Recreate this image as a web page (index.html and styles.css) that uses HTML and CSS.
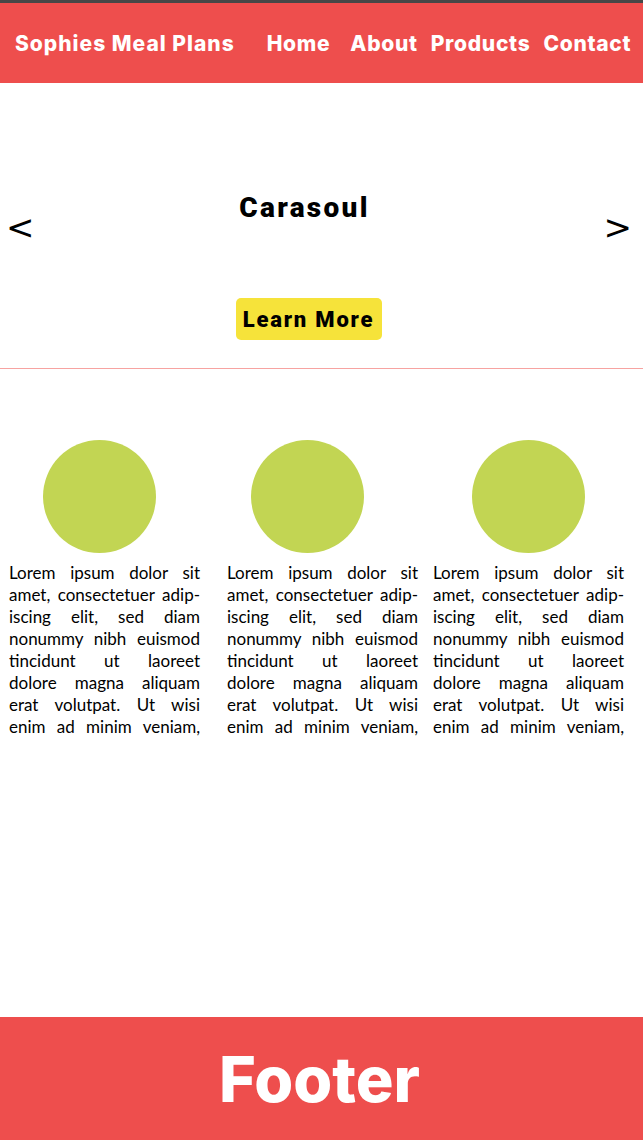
FILE: index.html
```html
<!DOCTYPE html>
<html lang="en">
<head>
<meta charset="utf-8">
<title>Sophies Meal Plans</title>
<link rel="stylesheet" href="styles.css">
</head>
<body>
<header class="site-header">
  <div class="brand">Sophies Meal Plans</div>
  <nav class="nav">
    <a class="nav-link home" href="#">Home</a>
    <a class="nav-link about" href="#">About</a>
    <a class="nav-link products" href="#">Products</a>
    <a class="nav-link contact" href="#">Contact</a>
  </nav>
</header>
<main class="main">
  <section class="carousel">
    <span class="arrow">&lt;</span>
    <div class="carousel-body">
      <h1 class="carousel-title">Carasoul</h1>
      <a class="btn" href="#">Learn More</a>
    </div>
    <span class="arrow arrow-right">&gt;</span>
  </section>
  <section class="features">
    <div class="feature f1">
      <div class="circle"></div>
      <p class="text">Lorem ipsum dolor sit amet, consectetuer adip&shy;iscing elit, sed diam nonummy nibh euismod tincidunt ut laoreet dolore magna aliquam erat volutpat. Ut wisi enim ad minim veniam,</p>
    </div>
    <div class="feature f2">
      <div class="circle"></div>
      <p class="text">Lorem ipsum dolor sit amet, consectetuer adip&shy;iscing elit, sed diam nonummy nibh euismod tincidunt ut laoreet dolore magna aliquam erat volutpat. Ut wisi enim ad minim veniam,</p>
    </div>
    <div class="feature f3">
      <div class="circle"></div>
      <p class="text">Lorem ipsum dolor sit amet, consectetuer adip&shy;iscing elit, sed diam nonummy nibh euismod tincidunt ut laoreet dolore magna aliquam erat volutpat. Ut wisi enim ad minim veniam,</p>
    </div>
  </section>
</main>
<footer class="site-footer">Footer</footer>
</body>
</html>
```
FILE: styles.css
```css
* { box-sizing: border-box; }
html, body { margin: 0; padding: 0; }
body {
  min-height: 1140px;
  display: flex;
  flex-direction: column;
  background: #fff;
  font-family: "Liberation Sans", Arial, sans-serif;
}
.site-header {
  height: 83px;
  border-top: 3px solid #474747;
  background: #ee4e4d;
  display: flex;
  align-items: center;
  padding: 0 0 0 15px;
  color: #fff;
  font-family: Inter, "Liberation Sans", sans-serif;
  font-weight: 800;
  font-size: 21px;
}
.brand { white-space: nowrap; letter-spacing: 1px; }
.nav {
  display: flex;
  margin-left: 32px;
  letter-spacing: 0.7px;
}
.nav-link { color: #fff; text-decoration: none; white-space: nowrap; }
.about { margin-left: 20px; }
.products { margin-left: 13px; }
.contact { margin-left: 13px; }

.main { flex: 1; }
.carousel {
  height: 286px;
  border-bottom: 1px solid #f7a3a1;
  display: flex;
  align-items: flex-start;
  padding: 0 11px 0 6px;
}
.arrow {
  width: 30px;
  font-family: "DejaVu Sans", sans-serif;
  font-size: 34px;
  line-height: 1;
  margin-top: 127px;
  color: #000;
}
.arrow-right { text-align: right; }
.carousel-body {
  flex: 1;
  display: flex;
  flex-direction: column;
  align-items: center;
  padding: 107px 29px 0 0;
}
.carousel-title {
  margin: 0;
  font-family: Roboto, sans-serif;
  font-weight: 900;
  font-size: 28px;
  line-height: 36px;
  letter-spacing: 2.3px;
  color: #000;
}
.btn {
  margin-top: 72px;
  margin-left: 8px;
  background: #f6e33a;
  border-radius: 5px;
  width: 146px;
  height: 42px;
  display: flex;
  align-items: center;
  justify-content: center;
  color: #000;
  text-decoration: none;
  font-family: Roboto, sans-serif;
  font-weight: 900;
  font-size: 22px;
  letter-spacing: 1.8px;
}

.features {
  display: flex;
  padding-top: 71px;
}
.feature { display: flex; flex-direction: column; }
.f1 { width: 216px; padding-left: 9px; }
.f2 { width: 206px; padding-left: 11px; }
.f3 { width: 201px; padding-left: 11px; }
.circle {
  width: 113px;
  height: 113px;
  border-radius: 50%;
  background: #c2d553;
}
.f1 .circle { margin-left: 34px; }
.f2 .circle { margin-left: 24px; }
.f3 .circle { margin-left: 39px; }
.text {
  margin: 9px 0 0;
  width: 191px;
  font-family: Lato, sans-serif;
  font-size: 17px;
  line-height: 22px;
  text-align: justify;
  text-align-last: justify;
  hyphens: manual;
  color: #000;
}

.site-footer {
  height: 123px;
  background: #ee4e4d;
  color: #fff;
  display: flex;
  align-items: center;
  justify-content: center;
  font-family: Inter, sans-serif;
  font-weight: 800;
  font-size: 63px;
  padding-right: 4px;
}
```
